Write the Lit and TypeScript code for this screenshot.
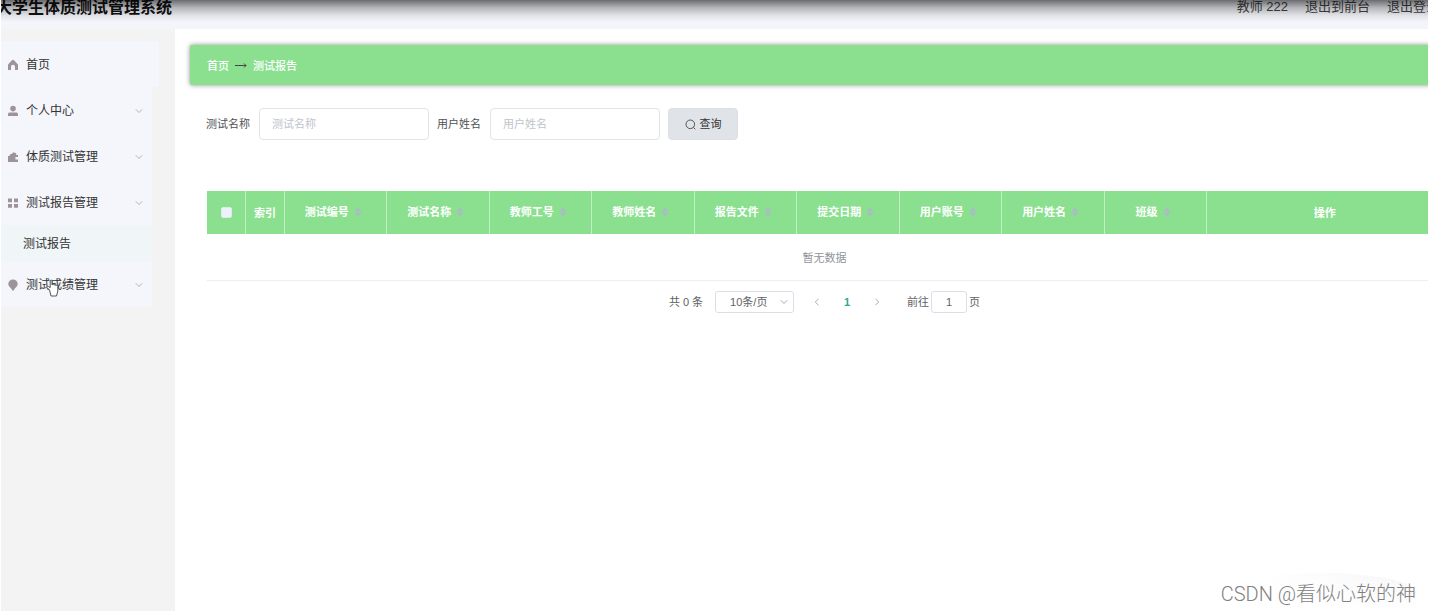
import { LitElement, html, css, svg, nothing } from "lit";
import { customElement, state } from "lit/decorators.js";

const icons = {
  home: svg`<path d="M6 .8Q6.500.8 7 1.300L10.500 5Q11 5.500 11 6.200V11H8V7.800A2 2 0 0 0 4 7.800V11H1V6.200Q1 5.500 1.500 5L5 1.300Q5.500.8 6 .8Z"/>`,
  user: svg`<circle cx="6" cy="3.600" r="2.800"/><path d="M1 11V9.200C1 7.800 2 7.400 3 7.400h6c1 0 2 .4 2 1.800V11Z"/>`,
  wallet: svg`<path d="M1 5h1.400L3 3.400l2.400-.8L6 1.200l3.400 1-.6 1.600L11 4v2H8.400v2.400H11V11H1Z"/>`,
  grid: svg`<path d="M1 1.400h4v3.800H1ZM7 1.400h4v3.800H7ZM1 7h4v3.800H1ZM7 7h4v3.800H7Z"/>`,
  pin: svg`<path d="M6 .4a4.700 4.700 0 0 1 4.700 4.700C10.700 7.400 8.600 8.800 7.600 9.800L6.800 11.600H5.200L4.400 9.800C3.400 8.800 1.300 7.400 1.300 5.100A4.700 4.700 0 0 1 6 .4Z"/>`,
};

interface MenuItem {
  label: string;
  icon: keyof typeof icons;
  children?: string[];
  expandable?: boolean;
}

const menu: MenuItem[] = [
  { label: "首页", icon: "home" },
  { label: "个人中心", icon: "user", expandable: true },
  { label: "体质测试管理", icon: "wallet", expandable: true },
  { label: "测试报告管理", icon: "grid", expandable: true, children: ["测试报告"] },
  { label: "测试成绩管理", icon: "pin", expandable: true },
];

const columns = [
  "测试编号", "测试名称", "教师工号", "教师姓名", "报告文件",
  "提交日期", "用户账号", "用户姓名", "班级",
];

const chevron = (d: string) => html`
  <svg class="chevron" viewBox="0 0 8 8" aria-hidden="true"><path d=${d} /></svg>
`;
const DOWN = "M.8 2.300 4 5.500 7.200 2.300";
const LEFT = "M5.500.8 2.300 4 5.500 7.200";
const RIGHT = "M2.500.8 5.700 4 2.500 7.200";

@customElement("side-menu")
export class SideMenu extends LitElement {
  static styles = css`
    :host { display: block; width: 174px; flex: none; background: #f3f3f3; padding-top: 12px; box-sizing: border-box; }
    .list { list-style: none; margin: 0; padding: 0; }
    .entry { position: relative; width: 151px; background: #f4f6fb; }
    .entry.plain { width: 158px; }
    .item {
      display: flex; align-items: center; gap: 7px; width: 100%; height: 46px;
      padding: 0 9px 1px 6px; border: 0; background: none; color: #333; text-align: left;
      font: inherit; font-size: 12px; box-sizing: border-box; text-decoration: none; cursor: pointer;
    }
    .label { flex: 1; }
    .icon { width: 12px; height: 12px; margin-top: 3px; fill: #9d939b; }
    .chevron { width: 8px; height: 8px; margin-top: 2px; fill: none; stroke: #b0b3b8; }
    .sub { display: block; height: 36px; line-height: 38px; padding-left: 22px; background: #f0f5f7; color: #333; font-size: 12px; text-decoration: none; }
    .pointer { position: absolute; left: 44px; top: 17px; width: 16px; height: 20px; }
  `;

  render() {
    return html`<nav aria-label="主菜单"><ul class="list">
      ${menu.map((m) => html`
        <li class="entry ${m.expandable ? "" : "plain"}">
          ${m.expandable
            ? html`<button class="item" type="button" aria-expanded=${m.children ? "true" : "false"}>
                ${this.icon(m)}<span class="label">${m.label}</span>${chevron(DOWN)}
              </button>`
            : html`<a class="item" href="#">${this.icon(m)}<span class="label">${m.label}</span></a>`}
          ${m.children?.map((c) => html`<a class="sub" href="#">${c}</a>`)}
          ${m.icon === "pin"
            ? html`<svg class="pointer" viewBox="0 0 16 20" aria-hidden="true">
                <path d="M4.500 12 2.200 9.700c-1-.9.300-2 1.200-1.300l1.800 1.300V3c0-1.300 1.800-1.300 1.800 0v4c.3-.9 1.800-.8 2 .2.500-.8 1.700-.6 1.900.4.600-.7 1.900-.4 1.900.7V13l-1.300 5H6Z"
                  fill="#fff" stroke="#555" stroke-width="1" stroke-linejoin="round"/>
              </svg>`
            : nothing}
        </li>`)}
    </ul></nav>`;
  }

  private icon(m: MenuItem) {
    return html`<svg class="icon" viewBox="0 0 12 12" aria-hidden="true">${icons[m.icon]}</svg>`;
  }
}

@customElement("report-table")
export class ReportTable extends LitElement {
  static styles = css`
    :host { display: block; }
    .table { width: 100%; table-layout: fixed; border-collapse: separate; border-spacing: 0; font-size: 11px; }
    .check-col, .index-col { width: 39px; }
    .action-col { width: 19%; }
    .head {
      height: 43px; padding: 0; background: #8ae08f; color: #fff; font-weight: 700; line-height: 16px;
      border-right: 1px solid #c3efc6; box-sizing: border-box; text-align: center;
    }
    .head:last-child { border-right: 0; }
    .box {
      appearance: none; display: block; width: 11px; height: 11px; margin: 0 auto;
      background: #edf1fb; border: 1px solid #dfe9ee; border-radius: 2px;
    }
    .sort {
      display: inline-flex; align-items: center; padding: 0 0 2px; border: 0; background: none;
      color: inherit; font: inherit; cursor: pointer;
    }
    .caret { width: 18px; height: 10px; fill: #aabbc2; }
    .empty { height: 47px; padding: 0; text-align: center; color: #909399; border-bottom: 1px solid #ebeef5; box-sizing: border-box; }
  `;

  render() {
    return html`<table class="table">
      <colgroup>
        <col class="check-col" /><col class="index-col" />
        ${columns.map(() => html`<col />`)}
        <col class="action-col" />
      </colgroup>
      <thead><tr>
        <th class="head"><input class="box" type="checkbox" aria-label="全选" /></th>
        <th class="head">索引</th>
        ${columns.map((c) => html`<th class="head">
          <button class="sort" type="button">${c}<svg class="caret" viewBox="0 0 18 10" aria-hidden="true">
            <path d="M9 0 12.500 4.600h-7ZM9 10 12.500 5.400h-7Z"/></svg></button>
        </th>`)}
        <th class="head">操作</th>
      </tr></thead>
      <tbody><tr><td class="empty" colspan="12">暂无数据</td></tr></tbody>
    </table>`;
  }
}

@customElement("page-nav")
export class PageNav extends LitElement {
  static styles = css`
    :host { display: flex; justify-content: center; align-items: center; height: 22px; color: #606266; font-size: 11px; line-height: 20px; }
    .size { position: relative; display: flex; margin: 0 8px 0 12px; }
    .select {
      appearance: none; width: 79px; height: 22px; padding: 0 0 0 14px; border: 1px solid #dcdfe6; border-radius: 3px;
      background: #fff; color: #606266; font: inherit;
    }
    .size .chevron { position: absolute; right: 6px; top: 7px; pointer-events: none; }
    .chevron { display: block; width: 8px; height: 8px; fill: none; stroke: #a6aab2; }
    .page { display: flex; align-items: center; justify-content: center; width: 30px; height: 22px; padding: 0; border: 0; background: none; color: #606266; font: inherit; cursor: pointer; }
    .page.active { color: #26ab96; font-weight: 700; }
    .jump { display: flex; align-items: center; gap: 2px; margin-left: 15px; }
    .number { width: 36px; height: 22px; box-sizing: border-box; padding: 0; border: 1px solid #dcdfe6; border-radius: 3px; background: #fff; color: #606266; font: inherit; text-align: center; }
  `;

  render() {
    return html`
      <span>共 0 条</span>
      <div class="size">
        <select class="select" aria-label="每页条数"><option>10条/页</option></select>
        ${chevron(DOWN)}
      </div>
      <button class="page" type="button" aria-label="上一页">${chevron(LEFT)}</button>
      <button class="page active" type="button" aria-current="page">1</button>
      <button class="page" type="button" aria-label="下一页">${chevron(RIGHT)}</button>
      <label class="jump">前往<input class="number" type="text" inputmode="numeric" .value=${"1"} />页</label>
    `;
  }
}

@customElement("app-root")
export class AppRoot extends LitElement {
  static styles = css`
    :host {
      display: flex; flex-direction: column; position: relative; min-height: 100vh; box-sizing: border-box;
      border: solid #fff; border-width: 0 1px 1px; overflow: hidden; background: #fff;
      font-family: "Liberation Sans", "Noto Sans CJK SC", sans-serif; font-size: 11px; color: #333;
    }
    .top {
      position: relative; display: flex; justify-content: space-between; height: 29px; margin-right: -11px;
      background: #f3f5fa; overflow: hidden; line-height: 14px; white-space: nowrap;
    }
    .top::after {
      content: ""; position: absolute; inset: 0 0 auto; height: 22px; pointer-events: none;
      background: linear-gradient(rgba(0, 0, 0, 0.56), rgba(0, 0, 0, 0.26) 35%, rgba(0, 0, 0, 0.07) 72%, transparent);
    }
    .title { margin: 0 0 0 -5px; font-size: 16px; line-height: 16px; font-weight: 700; color: #111; }
    .account { display: flex; gap: 17px; font-size: 13px; color: #444; }
    .account a { color: inherit; text-decoration: none; }
    .body { display: flex; flex: 1; margin-right: -29px; }
    .main { flex: 1; min-width: 0; padding: 16px 15px; }
    .crumbs {
      display: flex; align-items: center; gap: 6px; height: 40px; padding: 0 17px; border-radius: 2px;
      background: #8ae08f; box-shadow: 0 0 5px rgba(0, 0, 0, 0.45); color: #fff; box-sizing: border-box;
    }
    .crumbs a { color: inherit; text-decoration: none; font-weight: 500; }
    .current { font-weight: 500; }
    .arrow { width: 12px; height: 8px; fill: none; stroke: #444; }
    .panel { padding: 23px 0 0 17px; }
    .search { display: flex; align-items: center; gap: 8px; margin: 0 0 51px -1px; line-height: 16px; }
    .field { display: flex; align-items: center; gap: 9px; color: #505256; }
    .text {
      width: 170px; height: 32px; box-sizing: border-box; padding: 0 12px; border: 1px solid #e1e4ea;
      border-radius: 4px; background: #fff; color: #606266; font: inherit;
    }
    .text::placeholder { color: #c0c4cc; }
    .query {
      display: flex; align-items: center; justify-content: center; gap: 4px; width: 70px; height: 32px; padding: 0;
      border: 1px solid #dcdfe6; border-radius: 4px; background: #e0e4e9; color: #333; font: inherit; cursor: pointer;
    }
    .lens { width: 11px; height: 11px; fill: none; stroke: #555; }
    .pages { margin-top: 10px; }
    .mark {
      position: absolute; right: 12px; bottom: 4px; padding-left: 12px; font-size: 20px; line-height: 26px;
      font-family: Roboto, "Noto Sans CJK SC", sans-serif; font-weight: 300; color: #808080;
    }
    .glow {
      position: absolute; right: 12px; bottom: 0; width: 190px; height: 38px; border-radius: 50% 50% 0 0;
      background: linear-gradient(transparent, #fff), linear-gradient(90deg, transparent 20%, #f6f6f6);
    }
  `;

  @state() private name = "";
  @state() private user = "";

  render() {
    return html`
      <header class="top">
        <h1 class="title">大学生体质测试管理系统</h1>
        <div class="account">
          <span>教师 222</span><a href="#">退出到前台</a><a href="#">退出登录</a>
        </div>
      </header>
      <div class="body">
        <side-menu></side-menu>
        <main class="main">
          <nav class="crumbs" aria-label="路径">
            <a href="#">首页</a>
            <svg class="arrow" viewBox="0 0 12 8" aria-hidden="true"><path d="M0 4.500H11M9 2.500 11 4.500 9 6.500"/></svg>
            <span class="current">测试报告</span>
          </nav>
          <section class="panel">
            <form class="search" @submit=${(e: Event) => e.preventDefault()}>
              <label class="field">测试名称<input class="text" type="text" placeholder="测试名称" .value=${this.name}
                @input=${(e: Event) => (this.name = (e.target as HTMLInputElement).value)} /></label>
              <label class="field">用户姓名<input class="text" type="text" placeholder="用户姓名" .value=${this.user}
                @input=${(e: Event) => (this.user = (e.target as HTMLInputElement).value)} /></label>
              <button class="query" type="submit">
                <svg class="lens" viewBox="0 0 11 11" aria-hidden="true"><circle cx="5.300" cy="5.300" r="4.300"/><path d="M8.300 8.300 10.300 10.300"/></svg>查询
              </button>
            </form>
            <report-table></report-table>
            <page-nav class="pages"></page-nav>
          </section>
        </main>
      </div>
      <div class="glow"></div>
      <div class="mark">CSDN @看似心软的神</div>
    `;
  }
}
